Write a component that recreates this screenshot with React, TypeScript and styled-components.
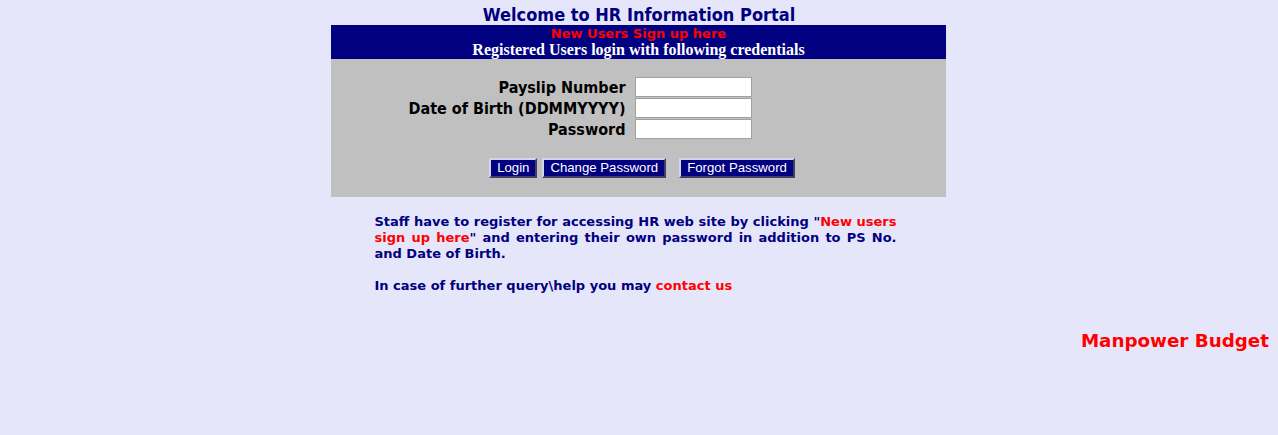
import React from "react";
import styled, { createGlobalStyle } from "styled-components";

const Global = createGlobalStyle`
  html, body { margin: 0; padding: 0; background: #e6e6fa; }
  body { font-family: "DejaVu Sans", Verdana, sans-serif; }
`;

const Page = styled.div`
  width: 1278px;
  height: 435px;
  display: flex;
  flex-direction: column;
  align-items: center;
  background: #e6e6fa;
`;

const Title = styled.h1`
  margin: 0;
  height: 25px;
  display: flex;
  align-items: flex-end;
  font-family: "DejaVu Sans Condensed", "DejaVu Sans", sans-serif;
  font-weight: bold;
  font-size: 18px;
  line-height: 20px;
  color: #000080;
`;

const Panel = styled.div`
  width: 615px;
  margin-right: 1px;
  display: flex;
  flex-direction: column;
`;

const Banner = styled.div`
  background: #000080;
  height: 34px;
  display: flex;
  flex-direction: column;
  align-items: center;
  justify-content: center;
`;

const SignUp = styled.a`
  font-family: "DejaVu Sans", Verdana, sans-serif;
  font-weight: bold;
  font-size: 13px;
  line-height: 15px;
  color: #ff0000;
  text-decoration: none;
  cursor: pointer;
`;

const Registered = styled.div`
  font-family: "Liberation Serif", "Times New Roman", serif;
  font-weight: bold;
  font-size: 16px;
  line-height: 18px;
  color: #ffffff;
`;

const FormArea = styled.div`
  background: #c0c0c0;
  height: 138px;
  box-sizing: border-box;
  padding-top: 18px;
  display: flex;
  flex-direction: column;
  align-items: center;
`;

const Fields = styled.div`
  display: grid;
  grid-template-columns: auto 117px;
  grid-auto-rows: 20px;
  column-gap: 9px;
  row-gap: 1px;
  align-items: center;
  margin-left: -117px;
`;

const Label = styled.label`
  font-family: "DejaVu Sans Condensed", "DejaVu Sans", sans-serif;
  font-weight: bold;
  font-size: 16px;
  line-height: 20px;
  height: 20px;
  color: #000000;
  text-align: right;
  transform: translateY(1px);
`;

const Input = styled.input`
  width: 117px;
  height: 20px;
  box-sizing: border-box;
  border: 1px solid #a0a0a0;
  background: #ffffff;
  margin: 0;
  padding: 1px 2px;
  font-size: 13px;
`;

const Buttons = styled.div`
  display: flex;
  margin-top: 19px;
  margin-left: 7px;
`;

const Button = styled.button<{ $gap?: number }>`
  height: 20px;
  margin-left: ${(p) => p.$gap ?? 0}px;
  box-sizing: border-box;
  padding: 0 6px;
  background: #000080;
  color: #ffffff;
  font-family: "Liberation Sans", Arial, sans-serif;
  font-size: 13.2px;
  line-height: 16px;
  border: 2px solid;
  border-color: #d4d4e8 #404060 #404060 #d4d4e8;
  cursor: pointer;
`;

const Info = styled.div`
  width: 522px;
  margin-top: 17px;
  margin-left: -7px;
  font-family: "DejaVu Sans", Verdana, sans-serif;
  font-weight: bold;
  font-size: 13px;
  line-height: 16px;
  color: #000080;
  text-align: justify;
`;

const Para = styled.p`
  margin: 0 0 16px 0;
`;

const Red = styled.a`
  color: #ff0000;
  text-decoration: none;
  cursor: pointer;
`;

const Footer = styled.div`
  align-self: stretch;
  display: flex;
  justify-content: flex-end;
  padding-right: 9px;
  margin-top: 20px;
`;

const Budget = styled.a`
  font-family: "DejaVu Sans", Verdana, sans-serif;
  font-weight: bold;
  font-size: 18.3px;
  line-height: 22px;
  color: #ff0000;
  text-decoration: none;
  cursor: pointer;
`;

export default function App() {
  return (
    <>
      <Global />
      <Page>
        <Title>Welcome to HR Information Portal</Title>
        <Panel>
          <Banner>
            <SignUp>New Users Sign up here</SignUp>
            <Registered>Registered Users login with following credentials</Registered>
          </Banner>
          <FormArea>
            <Fields>
              <Label htmlFor="ps">Payslip Number</Label>
              <Input id="ps" type="text" />
              <Label htmlFor="dob">Date of Birth (DDMMYYYY)</Label>
              <Input id="dob" type="text" />
              <Label htmlFor="pw">Password</Label>
              <Input id="pw" type="password" />
            </Fields>
            <Buttons>
              <Button>Login</Button>
              <Button $gap={5}>Change Password</Button>
              <Button $gap={13}>Forgot Password</Button>
            </Buttons>
          </FormArea>
        </Panel>
        <Info>
          <Para>
            Staff have to register for accessing HR web site by clicking "<Red>New users sign up here</Red>" and
            entering their own password in addition to PS No. and Date of Birth.
          </Para>
          <Para>
            In case of further query\help you may <Red>contact us</Red>
          </Para>
        </Info>
        <Footer>
          <Budget>Manpower Budget</Budget>
        </Footer>
      </Page>
    </>
  );
}
